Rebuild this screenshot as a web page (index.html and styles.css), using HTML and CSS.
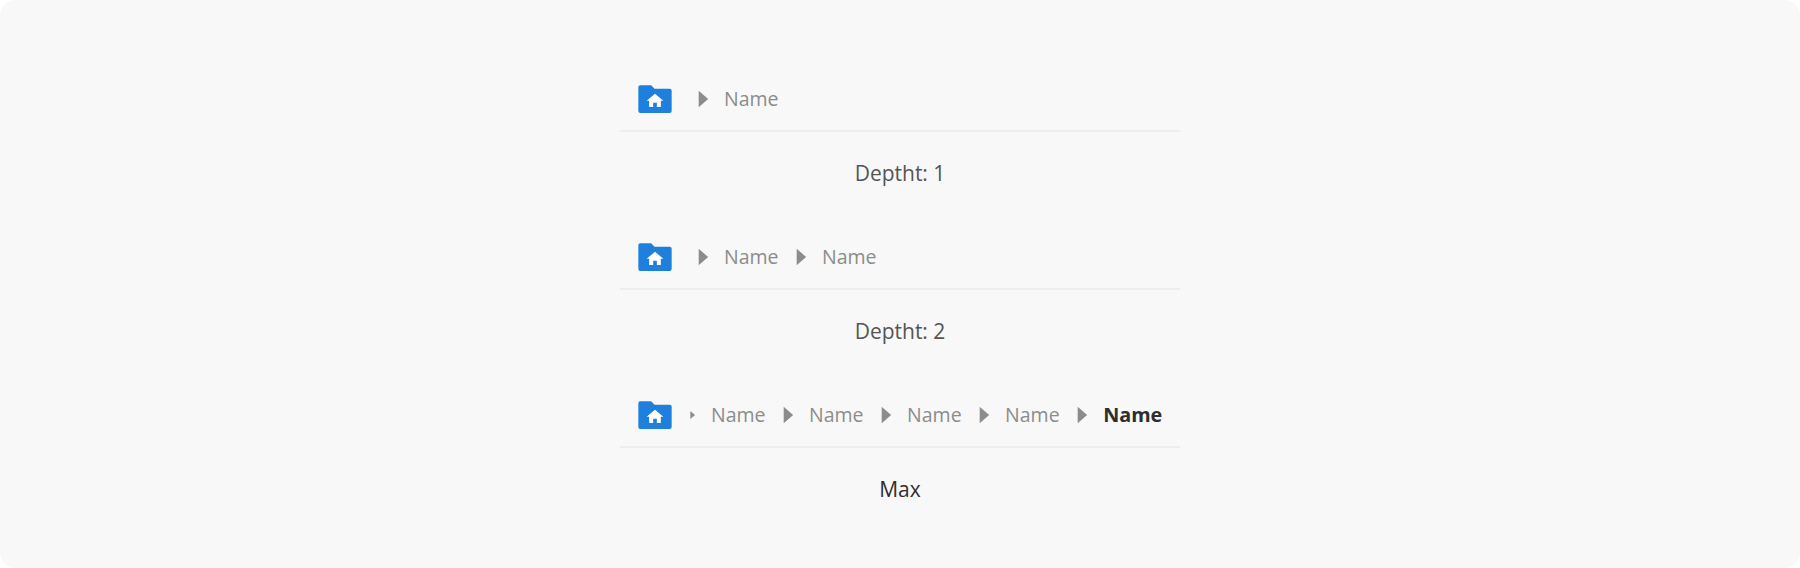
FILE: index.html
```html
<!DOCTYPE html>
<html lang="en">
<head>
<meta charset="utf-8">
<title>Breadcrumb</title>
<link rel="stylesheet" href="styles.css">
</head>
<body>
<svg class="defs" width="0" height="0" aria-hidden="true">
  <symbol id="home-folder" viewBox="0 0 24 24"><path fill="#1e80dc" d="M3.200 3.800h6.500l2 2h9.100a1.200 1.200 0 0 1 1.200 1.200v12.200a1.200 1.200 0 0 1-1.200 1.200H3.200A1.200 1.200 0 0 1 2 19.200V5a1.200 1.200 0 0 1 1.200-1.200z"/><path fill="#fff" d="M12 8.900l5 4.200h-1.500v3.700h-2.400v-2.600h-2.200v2.600H8.500v-3.700H7z"/></symbol>
  <symbol id="arrow" viewBox="0 0 24 24"><path fill="#8c8c8c" d="M10 7.100l5.700 4.900-5.700 4.900z"/></symbol>
</svg>
<main class="page">
  <section class="demo">
    <nav class="crumbs">
      <svg class="icon home"><use href="#home-folder"/></svg>
      <svg class="icon"><use href="#arrow"/></svg>
      <span class="name">Name</span>
    </nav>
    <p class="caption">Deptht: 1</p>
  </section>
  <section class="demo">
    <nav class="crumbs">
      <svg class="icon home"><use href="#home-folder"/></svg>
      <svg class="icon"><use href="#arrow"/></svg>
      <span class="name">Name</span>
      <svg class="icon"><use href="#arrow"/></svg>
      <span class="name">Name</span>
    </nav>
    <p class="caption">Deptht: 2</p>
  </section>
  <section class="demo">
    <nav class="crumbs">
      <svg class="icon home"><use href="#home-folder"/></svg>
      <svg class="icon small"><use href="#arrow"/></svg>
      <span class="name">Name</span>
      <svg class="icon"><use href="#arrow"/></svg>
      <span class="name">Name</span>
      <svg class="icon"><use href="#arrow"/></svg>
      <span class="name">Name</span>
      <svg class="icon"><use href="#arrow"/></svg>
      <span class="name">Name</span>
      <svg class="icon"><use href="#arrow"/></svg>
      <span class="name current">Name</span>
    </nav>
    <p class="caption dark">Max</p>
  </section>
</main>
</body>
</html>
```
FILE: styles.css
```css
* { box-sizing: border-box; }
html, body { margin: 0; background: #fff; }
.defs { display: block; height: 0; }
.page {
  width: 1800px;
  height: 568px;
  border-radius: 16px;
  background: #f8f8f8;
  padding-top: 68px;
  display: flex;
  flex-direction: column;
  align-items: center;
  gap: 30px;
  font-family: "Open Sans", sans-serif;
}
.demo { width: 560px; }
.crumbs {
  height: 64px;
  display: flex;
  align-items: center;
  padding-left: 15px;
  border-bottom: 2px solid #eeeeee;
}
.icon { width: 40px; height: 40px; flex: none; margin-left: 1.500px; }
.icon.home { margin-left: 0; margin-right: 5.500px; }
.icon.small { width: 20px; height: 20px; margin-right: 7px; }
.name { margin-left: 2px; font-size: 19.5px; line-height: 24px; color: #8c8c8c; }
.current { font-size: 19.800px; font-weight: 700; color: #2e2e2e; }
.caption {
  margin: 0;
  height: 64px;
  padding-top: 17px;
  display: flex;
  align-items: center;
  justify-content: center;
  font-size: 21px;
  color: #555555;
}
.caption.dark { color: #2e2e2e; }
```
